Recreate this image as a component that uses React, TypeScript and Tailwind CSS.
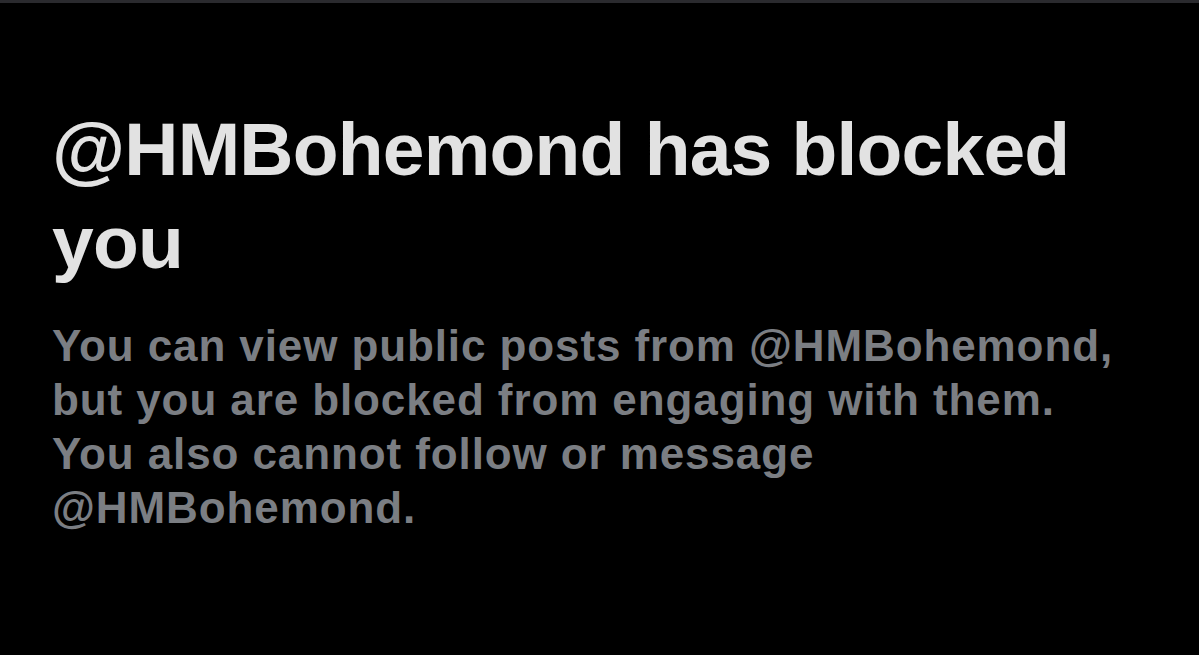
export default function App() {
  return (
    <div className="w-[1199px] h-[655px] bg-black border-t-[3px] border-[#2a2a2e] overflow-hidden font-['Liberation_Sans',Arial,sans-serif]">
      <div className="pl-[52px] pr-6 pt-[100px]">
        <h1 className="text-[75px] leading-[93px] font-bold text-[#e2e2e2] tracking-[-0.8px]">
          @HMBohemond has blocked
          <br />
          you
        </h1>
        <p className="mt-[30px] text-[44px] leading-[54px] font-bold text-[#7b7e83] tracking-[0.9px]">
          You can view public posts from @HMBohemond,
          <br />
          but you are blocked from engaging with them.
          <br />
          You also cannot follow or message
          <br />
          @HMBohemond.
        </p>
      </div>
    </div>
  );
}
